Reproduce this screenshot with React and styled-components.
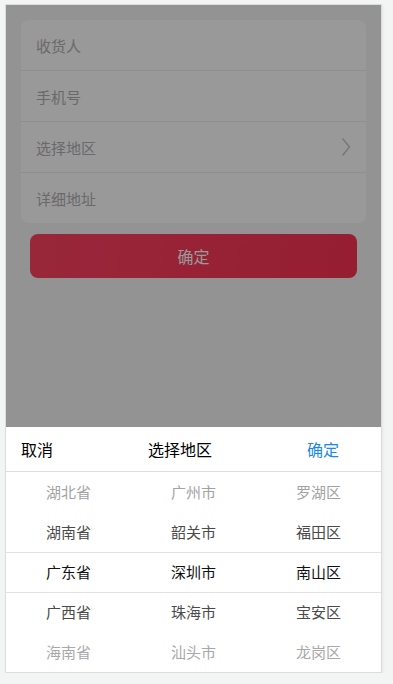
import React from "react";
import styled, { createGlobalStyle } from "styled-components";

const Global = createGlobalStyle`
  html, body { margin: 0; padding: 0; background: #f3f4f4; }
  body { font-family: "Noto Sans CJK SC", "Noto Sans", sans-serif; }
`;

const Stage = styled.div`
  padding: 4px 0 0 5px;
`;

const Phone = styled.div`
  position: relative;
  width: 375px;
  height: 667px;
  border: 1px solid #dcdcdc;
  background: #f5f5f5;
  overflow: hidden;
  box-shadow: 1px 1px 3px rgba(0, 0, 0, 0.06);
`;

const Content = styled.div`
  padding: 15px;
  display: flex;
  flex-direction: column;
  gap: 11px;
`;

const Card = styled.div`
  background: #fff;
  border-radius: 8px;
  overflow: hidden;
`;

const Row = styled.div`
  height: 50px;
  display: flex;
  align-items: center;
  justify-content: space-between;
  padding: 0 15px;
  font-size: 15px;
  color: #b0b0b0;
  & + & { border-top: 1px solid #eeeeee; }
`;

const SubmitButton = styled.button`
  margin: 0 9px;
  height: 44px;
  border: none;
  border-radius: 8px;
  background: linear-gradient(100deg, #ff4262, #fa3253);
  color: #fff;
  font-family: inherit;
  font-size: 16px;
`;

const Overlay = styled.div`
  position: absolute;
  inset: 0;
  background: rgba(0, 0, 0, 0.4);
`;

const Sheet = styled.div`
  position: absolute;
  left: 0;
  right: 0;
  bottom: 0;
  background: #fff;
`;

const SheetHeader = styled.div`
  height: 44px;
  display: flex;
  align-items: center;
  justify-content: space-between;
  padding: 0 42px 0 15px;
  border-bottom: 1px solid #dedede;
  font-size: 16px;
  color: #000;
`;

const Confirm = styled.span`
  color: #1a89e8;
`;

const Picker = styled.div`
  position: relative;
  display: grid;
  grid-template-columns: repeat(3, 1fr);
`;

const Band = styled.div`
  position: absolute;
  left: 0;
  right: 0;
  top: 80px;
  height: 41px;
  border-top: 1px solid #e2e2e2;
  border-bottom: 1px solid #e2e2e2;
  box-sizing: border-box;
  pointer-events: none;
`;

const Column = styled.div`
  display: flex;
  flex-direction: column;
`;

const shades = ["#a3a3a3", "#4a4a4a", "#111111", "#4a4a4a", "#a8a8a8"];

const Item = styled.div`
  height: 40px;
  display: flex;
  align-items: center;
  justify-content: center;
  padding-bottom: 2px;
  box-sizing: border-box;
  font-size: 15px;
  color: ${(p) => shades[p.$d]};
`;

const columns = [
  ["湖北省", "湖南省", "广东省", "广西省", "海南省"],
  ["广州市", "韶关市", "深圳市", "珠海市", "汕头市"],
  ["罗湖区", "福田区", "南山区", "宝安区", "龙岗区"],
];

const Chevron = () => (
  <svg width="10" height="20" viewBox="0 0 10 20" fill="none">
    <path d="M1.5 1.5 L8.5 10 L1.5 18.5" stroke="#c4c4c4" strokeWidth="1.3" />
  </svg>
);

export default function App() {
  return (
    <>
      <Global />
      <Stage>
        <Phone>
          <Content>
            <Card>
              <Row>收货人</Row>
              <Row>手机号</Row>
              <Row>
                选择地区
                <Chevron />
              </Row>
              <Row>详细地址</Row>
            </Card>
            <SubmitButton>确定</SubmitButton>
          </Content>
          <Overlay />
          <Sheet>
            <SheetHeader>
              <span>取消</span>
              <span>选择地区</span>
              <Confirm>确定</Confirm>
            </SheetHeader>
            <Picker>
              {columns.map((col, i) => (
                <Column key={i}>
                  {col.map((t, j) => (
                    <Item key={t} $d={j}>
                      {t}
                    </Item>
                  ))}
                </Column>
              ))}
              <Band />
            </Picker>
          </Sheet>
        </Phone>
      </Stage>
    </>
  );
}
